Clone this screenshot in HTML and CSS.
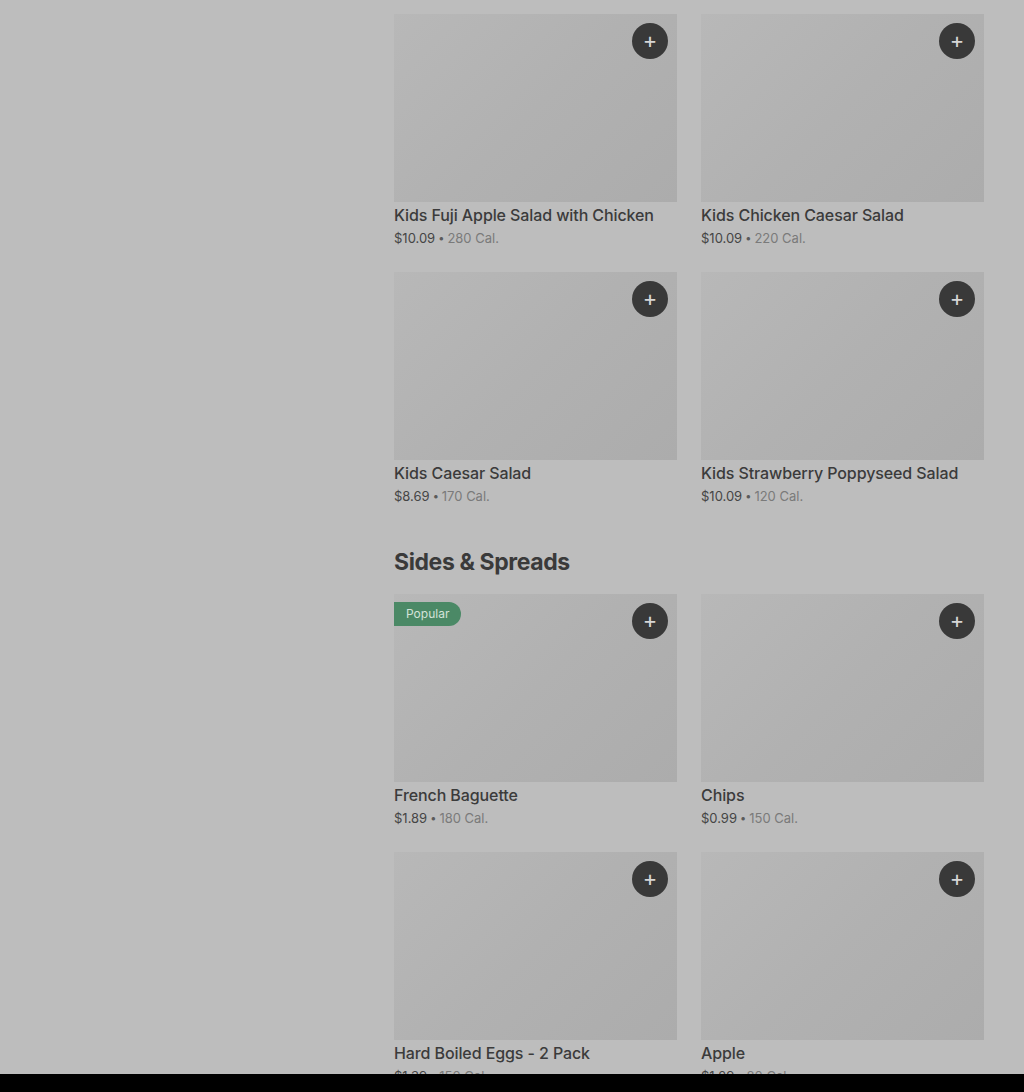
FILE: index.html
```html
<!DOCTYPE html>
<html lang="en">
<head>
    <meta charset="UTF-8">
    <meta name="viewport" content="width=device-width, initial-scale=1.0">
    <title>Menu</title>
    <link rel="stylesheet" href="styles.css">
</head>
<body>
    <div class="page">
        <aside class="sidebar"></aside>
        <main class="menu">
            <div class="grid">
                <div class="item">
                    <div class="thumb"><span class="add">+</span></div>
                    <div class="name">Kids Fuji Apple Salad with Chicken</div>
                    <div class="meta"><span class="price">$10.09</span><span class="dot">•</span><span class="cal">280 Cal.</span></div>
                </div>
                <div class="item">
                    <div class="thumb"><span class="add">+</span></div>
                    <div class="name">Kids Chicken Caesar Salad</div>
                    <div class="meta"><span class="price">$10.09</span><span class="dot">•</span><span class="cal">220 Cal.</span></div>
                </div>
                <div class="item">
                    <div class="thumb"><span class="add">+</span></div>
                    <div class="name">Kids Caesar Salad</div>
                    <div class="meta"><span class="price">$8.69</span><span class="dot">•</span><span class="cal">170 Cal.</span></div>
                </div>
                <div class="item">
                    <div class="thumb"><span class="add">+</span></div>
                    <div class="name">Kids Strawberry Poppyseed Salad</div>
                    <div class="meta"><span class="price">$10.09</span><span class="dot">•</span><span class="cal">120 Cal.</span></div>
                </div>
            </div>

            <h2 class="section-title">Sides &amp; Spreads</h2>
            <div class="grid">
                <div class="item">
                    <div class="thumb"><span class="badge">Popular</span><span class="add">+</span></div>
                    <div class="name">French Baguette</div>
                    <div class="meta"><span class="price">$1.89</span><span class="dot">•</span><span class="cal">180 Cal.</span></div>
                </div>
                <div class="item">
                    <div class="thumb"><span class="add">+</span></div>
                    <div class="name">Chips</div>
                    <div class="meta"><span class="price">$0.99</span><span class="dot">•</span><span class="cal">150 Cal.</span></div>
                </div>
                <div class="item">
                    <div class="thumb"><span class="add">+</span></div>
                    <div class="name">Hard Boiled Eggs - 2 Pack</div>
                    <div class="meta"><span class="price">$1.39</span><span class="dot">•</span><span class="cal">150 Cal.</span></div>
                </div>
                <div class="item">
                    <div class="thumb"><span class="add">+</span></div>
                    <div class="name">Apple</div>
                    <div class="meta"><span class="price">$1.29</span><span class="dot">•</span><span class="cal">80 Cal.</span></div>
                </div>
            </div>
        </main>
    </div>
    <div class="bottom-bar"></div>
</body>
</html>
```

FILE: styles.css
```css
body {
    margin: 0;
    background-color: #bdbdbd;
    font-family: Inter, "Liberation Sans", sans-serif;
    color: #3c3c3c;
    -webkit-font-smoothing: antialiased;
}

.page {
    display: flex;
    padding-top: 14px;
}

.sidebar {
    width: 394px;
    flex-shrink: 0;
}

.menu {
    width: 590px;
}

.grid {
    display: grid;
    grid-template-columns: 283px 283px;
    column-gap: 24px;
    row-gap: 24px;
}

.thumb {
    position: relative;
    height: 188px;
    background: linear-gradient(135deg, #b8b8b8 0%, #b1b1b1 50%, #acacac 100%);
}

.add {
    position: absolute;
    top: 9px;
    right: 9px;
    width: 36px;
    height: 36px;
    border-radius: 50%;
    background-color: #393939;
    color: #d6d6d6;
    font-size: 22px;
    line-height: 35px;
    text-align: center;
    font-weight: 400;
}

.badge {
    position: absolute;
    top: 8px;
    left: 0;
    height: 24px;
    padding: 0 12px;
    background-color: #4b8966;
    color: #d4e3d9;
    font-size: 12px;
    line-height: 24px;
    border-radius: 0 12px 12px 0;
}

.name {
    padding-top: 1px;
    font-size: 16px;
    line-height: 24px;
    font-weight: 500;
    color: #3b3b3b;
    letter-spacing: -0.1px;
    white-space: nowrap;
}

.meta {
    padding-top: 1px;
    height: 20px;
    font-size: 13px;
    line-height: 20px;
    color: #6e6e6e;
}

.price {
    color: #454545;
}

.dot {
    margin: 0 3px;
    font-size: 11px;
    line-height: 0;
    vertical-align: 1px;
    color: #5a5a5a;
}

.cal {
    color: #7a7a7a;
}

.section-title {
    margin: 40px 0 16px;
    font-size: 23px;
    line-height: 32px;
    font-weight: 700;
    color: #3a3a3a;
    letter-spacing: -0.4px;
}

.bottom-bar {
    position: fixed;
    left: 0;
    right: 0;
    bottom: 0;
    height: 18px;
    background-color: #000;
}
```
